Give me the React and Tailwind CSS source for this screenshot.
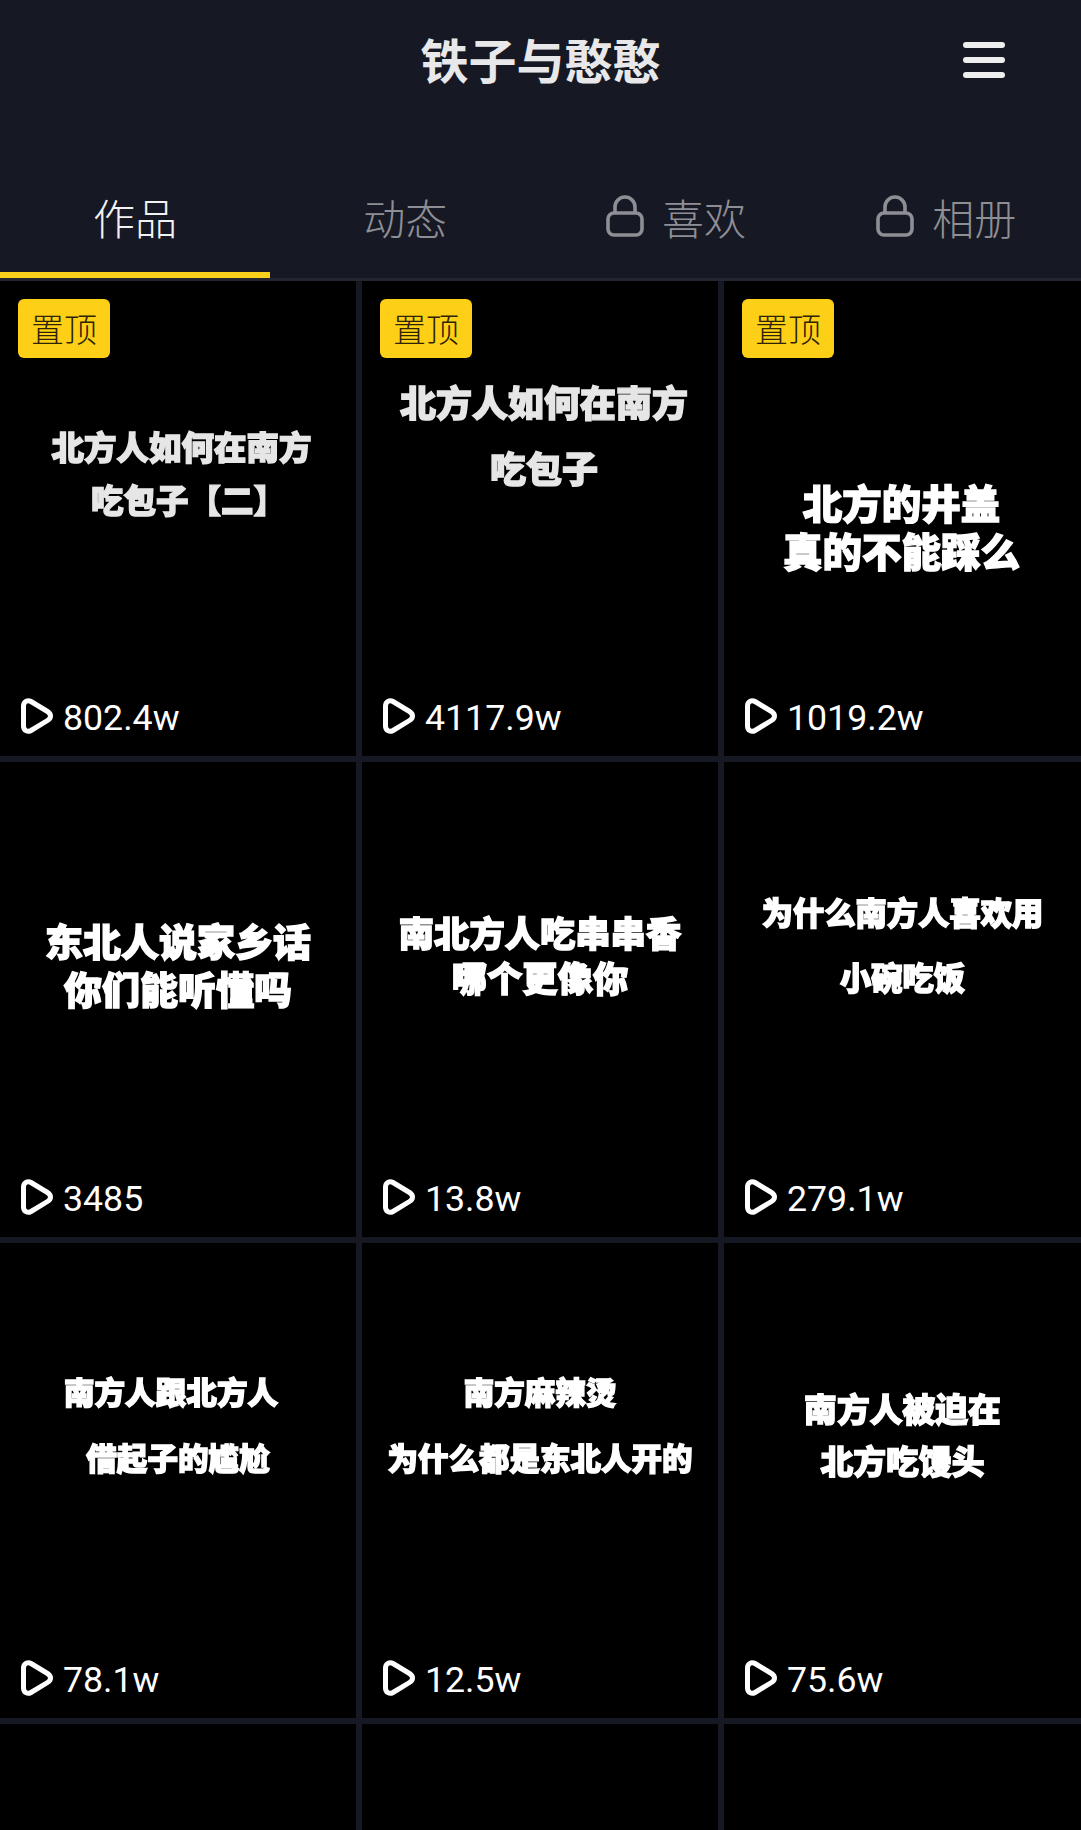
import React from 'react';

const CJK = "font-['Noto_Sans_CJK_SC',sans-serif]";
const HEAVY = 'font-black whitespace-nowrap blur-[0.5px] [-webkit-text-stroke:1.4px_currentColor]';

const videos = [
  { id: 1, pinned: true, plays: '802.4w', box: 'pt-[138px] pl-[7px] text-[32.5px] leading-[53px] text-[#e6e6e6]', lines: ['北方人如何在南方', '吃包子【二】'], secondLine: 'pl-[14px]' },
  { id: 2, pinned: true, plays: '4117.9w', box: 'pt-[87px] pl-[8px] text-[36px] leading-[66px] text-[#e6e6e6]', lines: ['北方人如何在南方', '吃包子'] },
  { id: 3, pinned: true, plays: '1019.2w', box: 'pt-[197px] pr-[2px] text-[39.5px] leading-[48px] text-white', lines: ['北方的井盖', '真的不能踩么'] },
  { id: 4, plays: '3485', box: 'pt-[154px] text-[38px] leading-[48px] text-white', lines: ['东北人说家乡话', '你们能听懂吗'] },
  { id: 5, plays: '13.8w', box: 'pt-[147px] text-[35.3px] leading-[45px] text-white', lines: ['南北方人吃串串香', '哪个更像你'] },
  { id: 6, plays: '279.1w', box: 'pt-[117px] text-[31.3px] leading-[65px] text-white', lines: ['为什么南方人喜欢用', '小碗吃饭'] },
  { id: 7, plays: '78.1w', box: 'pt-[115px] text-[30.6px] leading-[66px] text-white', lines: ['南方人跟北方人', '借起子的尴尬'], firstLine: 'pr-[14px]' },
  { id: 8, plays: '12.5w', box: 'pt-[115px] text-[30.5px] leading-[66px] text-white', lines: ['南方麻辣烫', '为什么都是东北人开的'] },
  { id: 9, plays: '75.6w', box: 'pt-[139px] text-[32.8px] leading-[52px] text-white', lines: ['南方人被迫在', '北方吃馒头'] },
  { id: 10, lines: [] },
  { id: 11, lines: [] },
  { id: 12, lines: [] },
];

function LockIcon() {
  return (
    <svg className="relative left-[1px] -top-[1px]" width="38" height="42" viewBox="0 0 38 42" fill="none" stroke="currentColor" strokeWidth="3.600">
      <rect x="2" y="18" width="34" height="22" rx="6" />
      <path d="M9 18v-6a10 10 0 0 1 20 0v6" />
    </svg>
  );
}

function PlayIcon() {
  return (
    <svg width="32" height="36" viewBox="0 0 32 36" fill="none" stroke="currentColor" strokeWidth="5" strokeLinejoin="round">
      <path d="M2.500 8C2.500 3.500 6.500 1.500 10 3.500L26.500 13.500C30.500 16 30.500 20 26.500 22.500L10 32.500C6.500 34.500 2.500 32.500 2.500 28Z" />
    </svg>
  );
}

function Tab({ label, active, locked }) {
  return (
    <div className={`relative flex items-center justify-center gap-[19px] pb-[20px] ${active ? 'text-[#f2f2f2]' : 'text-[#8e8f95]'}`}>
      {locked && <LockIcon />}
      <span className={`${CJK} text-[42px] font-light leading-none`}>{label}</span>
      {active && <div className="absolute bottom-0 left-0 right-0 h-[6px] bg-[#f9cf1c]" />}
    </div>
  );
}

function VideoCard({ video }) {
  return (
    <div className="relative h-[475px] bg-black">
      {video.pinned && (
        <div className={`${CJK} absolute left-[18px] top-[18px] flex h-[59px] w-[92px] items-center justify-center rounded-[6px] bg-[#fdd017] text-[33px] font-light leading-none text-[#2e2304]`}>
          置顶
        </div>
      )}
      {video.lines.length > 0 && (
        <div className={`${CJK} ${HEAVY} ${video.box} flex flex-col items-center`}>
          {video.lines.map((line, i) => (
            <div key={line} className={i === 0 ? video.firstLine : video.secondLine}>{line}</div>
          ))}
        </div>
      )}
      {video.plays && (
        <div className="absolute bottom-[22px] left-[21px] flex items-center gap-[10px] text-white">
          <PlayIcon />
          <span className="relative top-[2px] font-['Roboto',sans-serif] text-[35.700px] leading-[36px]">{video.plays}</span>
        </div>
      )}
    </div>
  );
}

export default function App() {
  return (
    <div className="h-[1830px] overflow-hidden bg-[#161823]">
      {/* Header */}
      <div className="relative flex h-[116px] items-center justify-center">
        <h1 className={`${CJK} text-[48px] font-bold leading-none text-[#e8e8ea]`}>铁子与憨憨</h1>
        <div className="absolute right-[76px] top-[42px] flex w-[42px] flex-col gap-[9px]">
          <div className="h-[6px] rounded-full bg-[#eeeeee]" />
          <div className="h-[6px] rounded-full bg-[#eeeeee]" />
          <div className="h-[6px] rounded-full bg-[#eeeeee]" />
        </div>
      </div>

      {/* Tabs */}
      <div className="grid h-[165px] grid-cols-4 border-b-[3px] border-[#24262f] pt-[60px] [&>*]:h-[102px]">
        <Tab label="作品" active />
        <Tab label="动态" />
        <Tab label="喜欢" locked />
        <Tab label="相册" locked />
      </div>

      {/* Video grid */}
      <div className="grid grid-cols-[356px_356px_357px] gap-[6px]">
        {videos.map((video) => (
          <VideoCard key={video.id} video={video} />
        ))}
      </div>
    </div>
  );
}
